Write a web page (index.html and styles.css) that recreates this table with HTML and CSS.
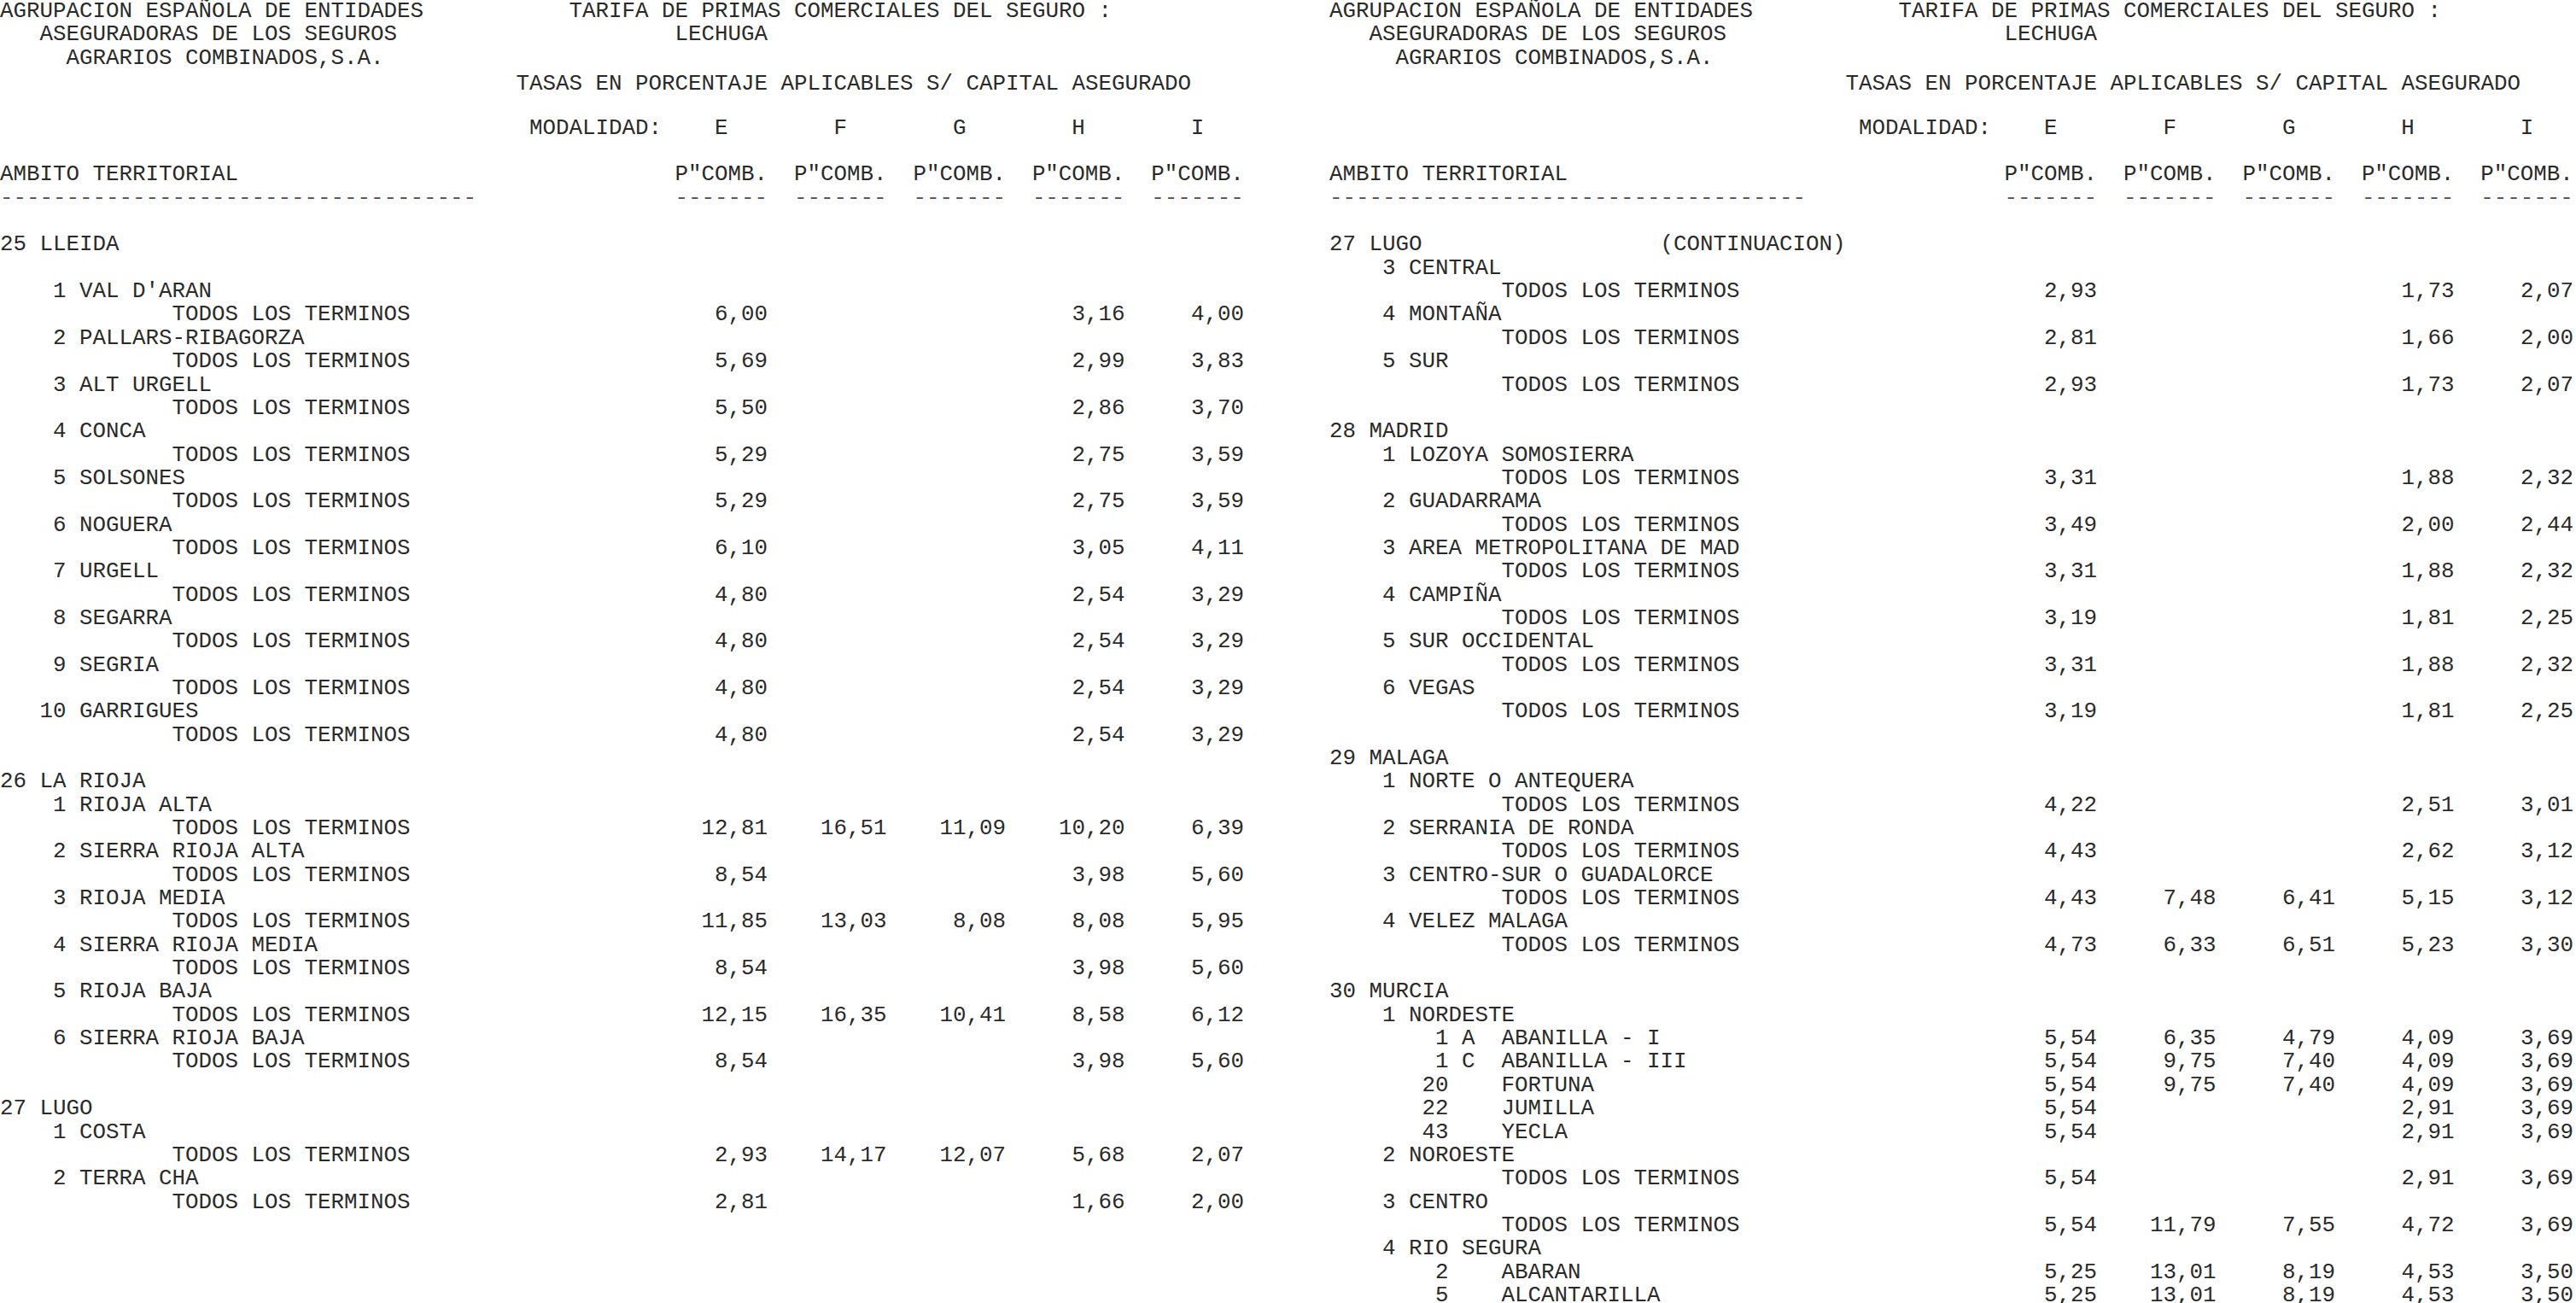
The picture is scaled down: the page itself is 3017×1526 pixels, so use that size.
FILE: index.html
```html
<!DOCTYPE html>
<html lang="es">
<head>
<meta charset="utf-8">
<title>Tarifa de primas comerciales - Lechuga</title>
<link rel="stylesheet" href="styles.css">
</head>
<body>
<main class="page">
  <section class="half">
    <div class="r"><span class="w43">AGRUPACION ESPAÑOLA DE ENTIDADES</span><span>TARIFA DE PRIMAS COMERCIALES DEL SEGURO :</span></div>
    <div class="r"><span class="w51 i3">ASEGURADORAS DE LOS SEGUROS</span><span>LECHUGA</span></div>
    <div class="r"><span class="i5">AGRARIOS COMBINADOS,S.A.</span></div>
    <div class="r drop"><span class="i39">TASAS EN PORCENTAJE APLICABLES S/ CAPITAL ASEGURADO</span></div>
    <div class="r"></div>
    <div class="r"><span class="w51 i40">MODALIDAD:</span><span class="cols"><span class="c7">E</span><span class="c7">F</span><span class="c7">G</span><span class="c7">H</span><span class="c7">I</span></span></div>
    <div class="r"></div>
    <div class="r"><span class="w51">AMBITO TERRITORIAL</span><span class="cols"><span class="c7">P"COMB.</span><span class="c7">P"COMB.</span><span class="c7">P"COMB.</span><span class="c7">P"COMB.</span><span class="c7">P"COMB.</span></span></div>
    <div class="r rule"><span class="w51">------------------------------------</span><span class="cols"><span class="c7">-------</span><span class="c7">-------</span><span class="c7">-------</span><span class="c7">-------</span><span class="c7">-------</span></span></div>
    <div class="r"></div>

    <div class="r"><span class="lbl">25 LLEIDA</span></div>
    <div class="r"></div>
    <div class="r"><span class="lbl i4">1 VAL D'ARAN</span></div>
    <div class="r"><span class="lbl i13">TODOS LOS TERMINOS</span><span class="n">6,00</span><span class="n"></span><span class="n"></span><span class="n">3,16</span><span class="n">4,00</span></div>
    <div class="r"><span class="lbl i4">2 PALLARS-RIBAGORZA</span></div>
    <div class="r"><span class="lbl i13">TODOS LOS TERMINOS</span><span class="n">5,69</span><span class="n"></span><span class="n"></span><span class="n">2,99</span><span class="n">3,83</span></div>
    <div class="r"><span class="lbl i4">3 ALT URGELL</span></div>
    <div class="r"><span class="lbl i13">TODOS LOS TERMINOS</span><span class="n">5,50</span><span class="n"></span><span class="n"></span><span class="n">2,86</span><span class="n">3,70</span></div>
    <div class="r"><span class="lbl i4">4 CONCA</span></div>
    <div class="r"><span class="lbl i13">TODOS LOS TERMINOS</span><span class="n">5,29</span><span class="n"></span><span class="n"></span><span class="n">2,75</span><span class="n">3,59</span></div>
    <div class="r"><span class="lbl i4">5 SOLSONES</span></div>
    <div class="r"><span class="lbl i13">TODOS LOS TERMINOS</span><span class="n">5,29</span><span class="n"></span><span class="n"></span><span class="n">2,75</span><span class="n">3,59</span></div>
    <div class="r"><span class="lbl i4">6 NOGUERA</span></div>
    <div class="r"><span class="lbl i13">TODOS LOS TERMINOS</span><span class="n">6,10</span><span class="n"></span><span class="n"></span><span class="n">3,05</span><span class="n">4,11</span></div>
    <div class="r"><span class="lbl i4">7 URGELL</span></div>
    <div class="r"><span class="lbl i13">TODOS LOS TERMINOS</span><span class="n">4,80</span><span class="n"></span><span class="n"></span><span class="n">2,54</span><span class="n">3,29</span></div>
    <div class="r"><span class="lbl i4">8 SEGARRA</span></div>
    <div class="r"><span class="lbl i13">TODOS LOS TERMINOS</span><span class="n">4,80</span><span class="n"></span><span class="n"></span><span class="n">2,54</span><span class="n">3,29</span></div>
    <div class="r"><span class="lbl i4">9 SEGRIA</span></div>
    <div class="r"><span class="lbl i13">TODOS LOS TERMINOS</span><span class="n">4,80</span><span class="n"></span><span class="n"></span><span class="n">2,54</span><span class="n">3,29</span></div>
    <div class="r"><span class="lbl i3">10 GARRIGUES</span></div>
    <div class="r"><span class="lbl i13">TODOS LOS TERMINOS</span><span class="n">4,80</span><span class="n"></span><span class="n"></span><span class="n">2,54</span><span class="n">3,29</span></div>
    <div class="r"></div>
    <div class="r"><span class="lbl">26 LA RIOJA</span></div>
    <div class="r"><span class="lbl i4">1 RIOJA ALTA</span></div>
    <div class="r"><span class="lbl i13">TODOS LOS TERMINOS</span><span class="n">12,81</span><span class="n">16,51</span><span class="n">11,09</span><span class="n">10,20</span><span class="n">6,39</span></div>
    <div class="r"><span class="lbl i4">2 SIERRA RIOJA ALTA</span></div>
    <div class="r"><span class="lbl i13">TODOS LOS TERMINOS</span><span class="n">8,54</span><span class="n"></span><span class="n"></span><span class="n">3,98</span><span class="n">5,60</span></div>
    <div class="r"><span class="lbl i4">3 RIOJA MEDIA</span></div>
    <div class="r"><span class="lbl i13">TODOS LOS TERMINOS</span><span class="n">11,85</span><span class="n">13,03</span><span class="n">8,08</span><span class="n">8,08</span><span class="n">5,95</span></div>
    <div class="r"><span class="lbl i4">4 SIERRA RIOJA MEDIA</span></div>
    <div class="r"><span class="lbl i13">TODOS LOS TERMINOS</span><span class="n">8,54</span><span class="n"></span><span class="n"></span><span class="n">3,98</span><span class="n">5,60</span></div>
    <div class="r"><span class="lbl i4">5 RIOJA BAJA</span></div>
    <div class="r"><span class="lbl i13">TODOS LOS TERMINOS</span><span class="n">12,15</span><span class="n">16,35</span><span class="n">10,41</span><span class="n">8,58</span><span class="n">6,12</span></div>
    <div class="r"><span class="lbl i4">6 SIERRA RIOJA BAJA</span></div>
    <div class="r"><span class="lbl i13">TODOS LOS TERMINOS</span><span class="n">8,54</span><span class="n"></span><span class="n"></span><span class="n">3,98</span><span class="n">5,60</span></div>
    <div class="r"></div>
    <div class="r"><span class="lbl">27 LUGO</span></div>
    <div class="r"><span class="lbl i4">1 COSTA</span></div>
    <div class="r"><span class="lbl i13">TODOS LOS TERMINOS</span><span class="n">2,93</span><span class="n">14,17</span><span class="n">12,07</span><span class="n">5,68</span><span class="n">2,07</span></div>
    <div class="r"><span class="lbl i4">2 TERRA CHA</span></div>
    <div class="r"><span class="lbl i13">TODOS LOS TERMINOS</span><span class="n">2,81</span><span class="n"></span><span class="n"></span><span class="n">1,66</span><span class="n">2,00</span></div>
  </section>

  <section class="half">
    <div class="r"><span class="w43">AGRUPACION ESPAÑOLA DE ENTIDADES</span><span>TARIFA DE PRIMAS COMERCIALES DEL SEGURO :</span></div>
    <div class="r"><span class="w51 i3">ASEGURADORAS DE LOS SEGUROS</span><span>LECHUGA</span></div>
    <div class="r"><span class="i5">AGRARIOS COMBINADOS,S.A.</span></div>
    <div class="r drop"><span class="i39">TASAS EN PORCENTAJE APLICABLES S/ CAPITAL ASEGURADO</span></div>
    <div class="r"></div>
    <div class="r"><span class="w51 i40">MODALIDAD:</span><span class="cols"><span class="c7">E</span><span class="c7">F</span><span class="c7">G</span><span class="c7">H</span><span class="c7">I</span></span></div>
    <div class="r"></div>
    <div class="r"><span class="w51">AMBITO TERRITORIAL</span><span class="cols"><span class="c7">P"COMB.</span><span class="c7">P"COMB.</span><span class="c7">P"COMB.</span><span class="c7">P"COMB.</span><span class="c7">P"COMB.</span></span></div>
    <div class="r rule"><span class="w51">------------------------------------</span><span class="cols"><span class="c7">-------</span><span class="c7">-------</span><span class="c7">-------</span><span class="c7">-------</span><span class="c7">-------</span></span></div>
    <div class="r"></div>

    <div class="r"><span class="w25">27 LUGO</span><span>(CONTINUACION)</span></div>
    <div class="r"><span class="lbl i4">3 CENTRAL</span></div>
    <div class="r"><span class="lbl i13">TODOS LOS TERMINOS</span><span class="n">2,93</span><span class="n"></span><span class="n"></span><span class="n">1,73</span><span class="n">2,07</span></div>
    <div class="r"><span class="lbl i4">4 MONTAÑA</span></div>
    <div class="r"><span class="lbl i13">TODOS LOS TERMINOS</span><span class="n">2,81</span><span class="n"></span><span class="n"></span><span class="n">1,66</span><span class="n">2,00</span></div>
    <div class="r"><span class="lbl i4">5 SUR</span></div>
    <div class="r"><span class="lbl i13">TODOS LOS TERMINOS</span><span class="n">2,93</span><span class="n"></span><span class="n"></span><span class="n">1,73</span><span class="n">2,07</span></div>
    <div class="r"></div>
    <div class="r"><span class="lbl">28 MADRID</span></div>
    <div class="r"><span class="lbl i4">1 LOZOYA SOMOSIERRA</span></div>
    <div class="r"><span class="lbl i13">TODOS LOS TERMINOS</span><span class="n">3,31</span><span class="n"></span><span class="n"></span><span class="n">1,88</span><span class="n">2,32</span></div>
    <div class="r"><span class="lbl i4">2 GUADARRAMA</span></div>
    <div class="r"><span class="lbl i13">TODOS LOS TERMINOS</span><span class="n">3,49</span><span class="n"></span><span class="n"></span><span class="n">2,00</span><span class="n">2,44</span></div>
    <div class="r"><span class="lbl i4">3 AREA METROPOLITANA DE MAD</span></div>
    <div class="r"><span class="lbl i13">TODOS LOS TERMINOS</span><span class="n">3,31</span><span class="n"></span><span class="n"></span><span class="n">1,88</span><span class="n">2,32</span></div>
    <div class="r"><span class="lbl i4">4 CAMPIÑA</span></div>
    <div class="r"><span class="lbl i13">TODOS LOS TERMINOS</span><span class="n">3,19</span><span class="n"></span><span class="n"></span><span class="n">1,81</span><span class="n">2,25</span></div>
    <div class="r"><span class="lbl i4">5 SUR OCCIDENTAL</span></div>
    <div class="r"><span class="lbl i13">TODOS LOS TERMINOS</span><span class="n">3,31</span><span class="n"></span><span class="n"></span><span class="n">1,88</span><span class="n">2,32</span></div>
    <div class="r"><span class="lbl i4">6 VEGAS</span></div>
    <div class="r"><span class="lbl i13">TODOS LOS TERMINOS</span><span class="n">3,19</span><span class="n"></span><span class="n"></span><span class="n">1,81</span><span class="n">2,25</span></div>
    <div class="r"></div>
    <div class="r"><span class="lbl">29 MALAGA</span></div>
    <div class="r"><span class="lbl i4">1 NORTE O ANTEQUERA</span></div>
    <div class="r"><span class="lbl i13">TODOS LOS TERMINOS</span><span class="n">4,22</span><span class="n"></span><span class="n"></span><span class="n">2,51</span><span class="n">3,01</span></div>
    <div class="r"><span class="lbl i4">2 SERRANIA DE RONDA</span></div>
    <div class="r"><span class="lbl i13">TODOS LOS TERMINOS</span><span class="n">4,43</span><span class="n"></span><span class="n"></span><span class="n">2,62</span><span class="n">3,12</span></div>
    <div class="r"><span class="lbl i4">3 CENTRO-SUR O GUADALORCE</span></div>
    <div class="r"><span class="lbl i13">TODOS LOS TERMINOS</span><span class="n">4,43</span><span class="n">7,48</span><span class="n">6,41</span><span class="n">5,15</span><span class="n">3,12</span></div>
    <div class="r"><span class="lbl i4">4 VELEZ MALAGA</span></div>
    <div class="r"><span class="lbl i13">TODOS LOS TERMINOS</span><span class="n">4,73</span><span class="n">6,33</span><span class="n">6,51</span><span class="n">5,23</span><span class="n">3,30</span></div>
    <div class="r"></div>
    <div class="r"><span class="lbl">30 MURCIA</span></div>
    <div class="r"><span class="lbl i4">1 NORDESTE</span></div>
    <div class="r"><span class="lbl i8">1 A  ABANILLA - I</span><span class="n">5,54</span><span class="n">6,35</span><span class="n">4,79</span><span class="n">4,09</span><span class="n">3,69</span></div>
    <div class="r"><span class="lbl i8">1 C  ABANILLA - III</span><span class="n">5,54</span><span class="n">9,75</span><span class="n">7,40</span><span class="n">4,09</span><span class="n">3,69</span></div>
    <div class="r"><span class="lbl i7">20    FORTUNA</span><span class="n">5,54</span><span class="n">9,75</span><span class="n">7,40</span><span class="n">4,09</span><span class="n">3,69</span></div>
    <div class="r"><span class="lbl i7">22    JUMILLA</span><span class="n">5,54</span><span class="n"></span><span class="n"></span><span class="n">2,91</span><span class="n">3,69</span></div>
    <div class="r"><span class="lbl i7">43    YECLA</span><span class="n">5,54</span><span class="n"></span><span class="n"></span><span class="n">2,91</span><span class="n">3,69</span></div>
    <div class="r"><span class="lbl i4">2 NOROESTE</span></div>
    <div class="r"><span class="lbl i13">TODOS LOS TERMINOS</span><span class="n">5,54</span><span class="n"></span><span class="n"></span><span class="n">2,91</span><span class="n">3,69</span></div>
    <div class="r"><span class="lbl i4">3 CENTRO</span></div>
    <div class="r"><span class="lbl i13">TODOS LOS TERMINOS</span><span class="n">5,54</span><span class="n">11,79</span><span class="n">7,55</span><span class="n">4,72</span><span class="n">3,69</span></div>
    <div class="r"><span class="lbl i4">4 RIO SEGURA</span></div>
    <div class="r"><span class="lbl i8">2    ABARAN</span><span class="n">5,25</span><span class="n">13,01</span><span class="n">8,19</span><span class="n">4,53</span><span class="n">3,50</span></div>
    <div class="r"><span class="lbl i8">5    ALCANTARILLA</span><span class="n">5,25</span><span class="n">13,01</span><span class="n">8,19</span><span class="n">4,53</span><span class="n">3,50</span></div>
  </section>
</main>
</body>
</html>
```

FILE: styles.css
```css
html, body {
  margin: 0;
  padding: 0;
  overflow: hidden;
  background: #ffffff;
}

body {
  font-family: "Liberation Mono", "DejaVu Sans Mono", monospace;
  font-size: 25.83px;
  color: #2a2a2a;
}

.page {
  display: grid;
  grid-template-columns: 1557px 1fr;
}

.half {
  display: flex;
  flex-direction: column;
}

.r {
  display: flex;
  box-sizing: border-box;
  height: 27.35px;
  line-height: 27.35px;
  white-space: pre;
}

.r > span {
  box-sizing: border-box;
  flex: none;
}

.drop {
  padding-top: 3px;
}

.rule {
  color: #5a5a5a;
}

.w25 { width: 25ch; }
.w43 { width: 43ch; }
.w51 { width: 51ch; }

.i3 { padding-left: 3ch; }
.i4 { padding-left: 4ch; }
.i5 { padding-left: 5ch; }
.i7 { padding-left: 7ch; }
.i8 { padding-left: 8ch; }
.i13 { padding-left: 13ch; }
.i39 { padding-left: 39ch; }
.i40 { padding-left: 40ch; }

.lbl { width: 49ch; }

.n {
  width: 9ch;
  text-align: right;
}

.cols {
  display: flex;
  gap: 2ch;
}

.c7 {
  width: 7ch;
  text-align: center;
}
```
